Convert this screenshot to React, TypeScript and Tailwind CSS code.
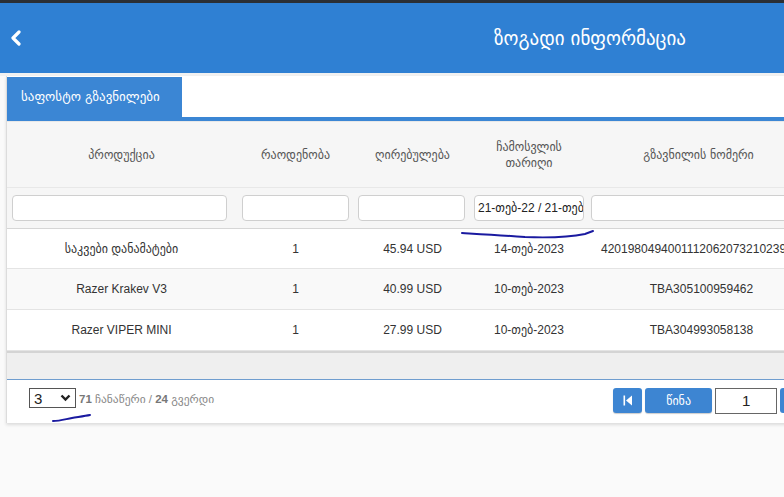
import React from "react";

const cols = "grid grid-cols-[229px_119px_115px_118px_249px]";

function Row({ p, q, v, d, t, alt, tLeft, h }: { p: string; q: string; v: string; d: string; t: string; alt?: boolean; tLeft?: boolean; h: string }) {
  return (
    <div className={`${cols} ${h} border-b border-[#e4e4e4] text-[12px] text-[#333] ${alt ? "bg-[#f9f9f9]" : "bg-white"}`}>
      <div className="flex items-center justify-center">{p}</div>
      <div className="flex items-center justify-center">{q}</div>
      <div className="flex items-center justify-center">{v}</div>
      <div className="flex items-center justify-center">{d}</div>
      <div className={`flex items-center overflow-visible whitespace-nowrap ${tLeft ? "pl-[13px]" : "justify-center pr-[22px]"}`}>{t}</div>
    </div>
  );
}

export default function App() {
  return (
    <div className="relative w-[784px] h-[497px] overflow-hidden bg-[#fafafa] font-['Liberation_Sans','DejaVu_Sans',sans-serif]">
      <div className="h-[3px] bg-[#2b2f34]" />
      <header className="h-[70px] bg-[#2f80d3] flex items-center">
        <svg className="ml-[10px]" width="12" height="16" viewBox="0 0 12 16">
          <path d="M9 2 L3 8 L9 14" fill="none" stroke="white" strokeWidth="3.2" strokeLinecap="round" strokeLinejoin="round" />
        </svg>
        <div className="ml-[472px] text-white text-[19px] font-['DejaVu_Sans',sans-serif]">ზოგადი ინფორმაცია</div>
      </header>
      <div className="h-[3px] bg-[#f1f1f1]" />
      <div className="ml-[6px] w-[840px] bg-white border-l border-[#dcdcdc] shadow-[0_2px_3px_rgba(0,0,0,0.12)]">
        <div className="h-[41px] flex bg-white">
          <div className="mt-[1px] w-[175px] bg-[#3b86d4] text-white text-[13px] flex items-center pl-[14px] font-['DejaVu_Sans',sans-serif]">
            საფოსტო გზავნილები
          </div>
        </div>
        <div className="h-[4px] bg-[#3b86d4]" />
        <div className={`${cols} h-[67px] bg-[#f6f6f6] border-t border-[#e8e8e8] border-b border-[#d6d6d6] text-[12px] text-[#555] font-['DejaVu_Sans',sans-serif]`}>
          <div className="flex items-center justify-center">პროდუქცია</div>
          <div className="flex items-center justify-center">რაოდენობა</div>
          <div className="flex items-center justify-center">ღირებულება</div>
          <div className="flex items-center justify-center text-center leading-[16px] px-[20px]">ჩამოსვლის თარიღი</div>
          <div className="flex items-center justify-center pr-[28px]">გზავნილის ნომერი</div>
        </div>
        <div className="h-[41px] bg-[#f6f6f6] border-b border-[#d6d6d6] flex items-center">
          <div className="ml-[5px] w-[215px] h-[26px] bg-white border border-[#cfcfcf] rounded-[4px]" />
          <div className="ml-[15px] w-[107px] h-[26px] bg-white border border-[#cfcfcf] rounded-[4px]" />
          <div className="ml-[9px] w-[107px] h-[26px] bg-white border border-[#cfcfcf] rounded-[4px]" />
          <div className="ml-[9px] w-[110px] h-[26px] bg-white border border-[#cfcfcf] rounded-[4px] overflow-hidden whitespace-nowrap text-[12px] text-[#222] pl-[3px] flex items-center">
            21-თებ-22 / 21-თებ-22
          </div>
          <div className="ml-[7px] w-[220px] h-[26px] bg-white border border-[#cfcfcf] rounded-[4px]" />
        </div>
        <Row h="h-[40px]" p="საკვები დანამატები" q="1" v="45.94 USD" d="14-თებ-2023" t="42019804940011120620732102399012" tLeft />
        <Row h="h-[41px]" p="Razer Krakev V3" q="1" v="40.99 USD" d="10-თებ-2023" t="TBA305100959462" alt />
        <Row h="h-[41px]" p="Razer VIPER MINI" q="1" v="27.99 USD" d="10-თებ-2023" t="TBA304993058138" />
        <div className="h-[28px] bg-[#efefef] border-t-2 border-[#d4d4d4]" />
        <div className="h-[1px] bg-[#6f9dcf]" />
        <div className="h-[43px] bg-white flex items-start pt-[8px]">
          <div className="ml-[22px] w-[47px] h-[20px] border border-[#555] bg-white flex items-center justify-between px-[4px] text-[15px] text-[#222]">
            <span className="leading-none">3</span>
            <svg width="11" height="8" viewBox="0 0 11 8">
              <path d="M1.5 1.5 L5.5 5.5 L9.5 1.5" fill="none" stroke="#222" strokeWidth="2.4" />
            </svg>
          </div>
          <div className="ml-[3px] mt-[3px] text-[11.5px] text-[#888] whitespace-nowrap">
            <b className="text-[#777]">71</b> ჩანაწერი / <b className="text-[#777]">24</b> გვერდი
          </div>
          <div className="ml-[399px] w-[29px] h-[25px] bg-[#3d85d2] rounded-[3px] flex items-center justify-center shadow-[0_1px_1px_rgba(0,0,0,0.2)]">
            <svg width="10" height="11" viewBox="0 0 10 11">
              <rect x="0.5" y="0.5" width="1.6" height="10" fill="white" />
              <path d="M9 0.5 L3 5.5 L9 10.5 Z" fill="white" />
            </svg>
          </div>
          <div className="ml-[3px] w-[67px] h-[25px] bg-[#3d85d2] rounded-[3px] flex items-center justify-center text-white text-[12px] font-['DejaVu_Sans',sans-serif] shadow-[0_1px_1px_rgba(0,0,0,0.2)]">
            წინა
          </div>
          <div className="ml-[3px] w-[62px] h-[26px] border border-[#666] bg-white flex items-center justify-center text-[15px] text-[#222]">1</div>
          <div className="ml-[3px] w-[29px] h-[25px] bg-[#3d85d2] rounded-[3px]" />
        </div>
      </div>
      <svg className="absolute left-0 top-0 pointer-events-none" width="784" height="497">
        <path d="M462 233 C 480 234, 500 235, 525 237 C 550 238, 570 237, 585 234 L 593 231" fill="none" stroke="#1a1aa0" strokeWidth="2" strokeLinecap="round" />
        <path d="M53 421 C 60 421, 66 419, 72 418 C 78 417, 85 416, 90 415" fill="none" stroke="#1a1aa0" strokeWidth="2" strokeLinecap="round" />
      </svg>
    </div>
  );
}
